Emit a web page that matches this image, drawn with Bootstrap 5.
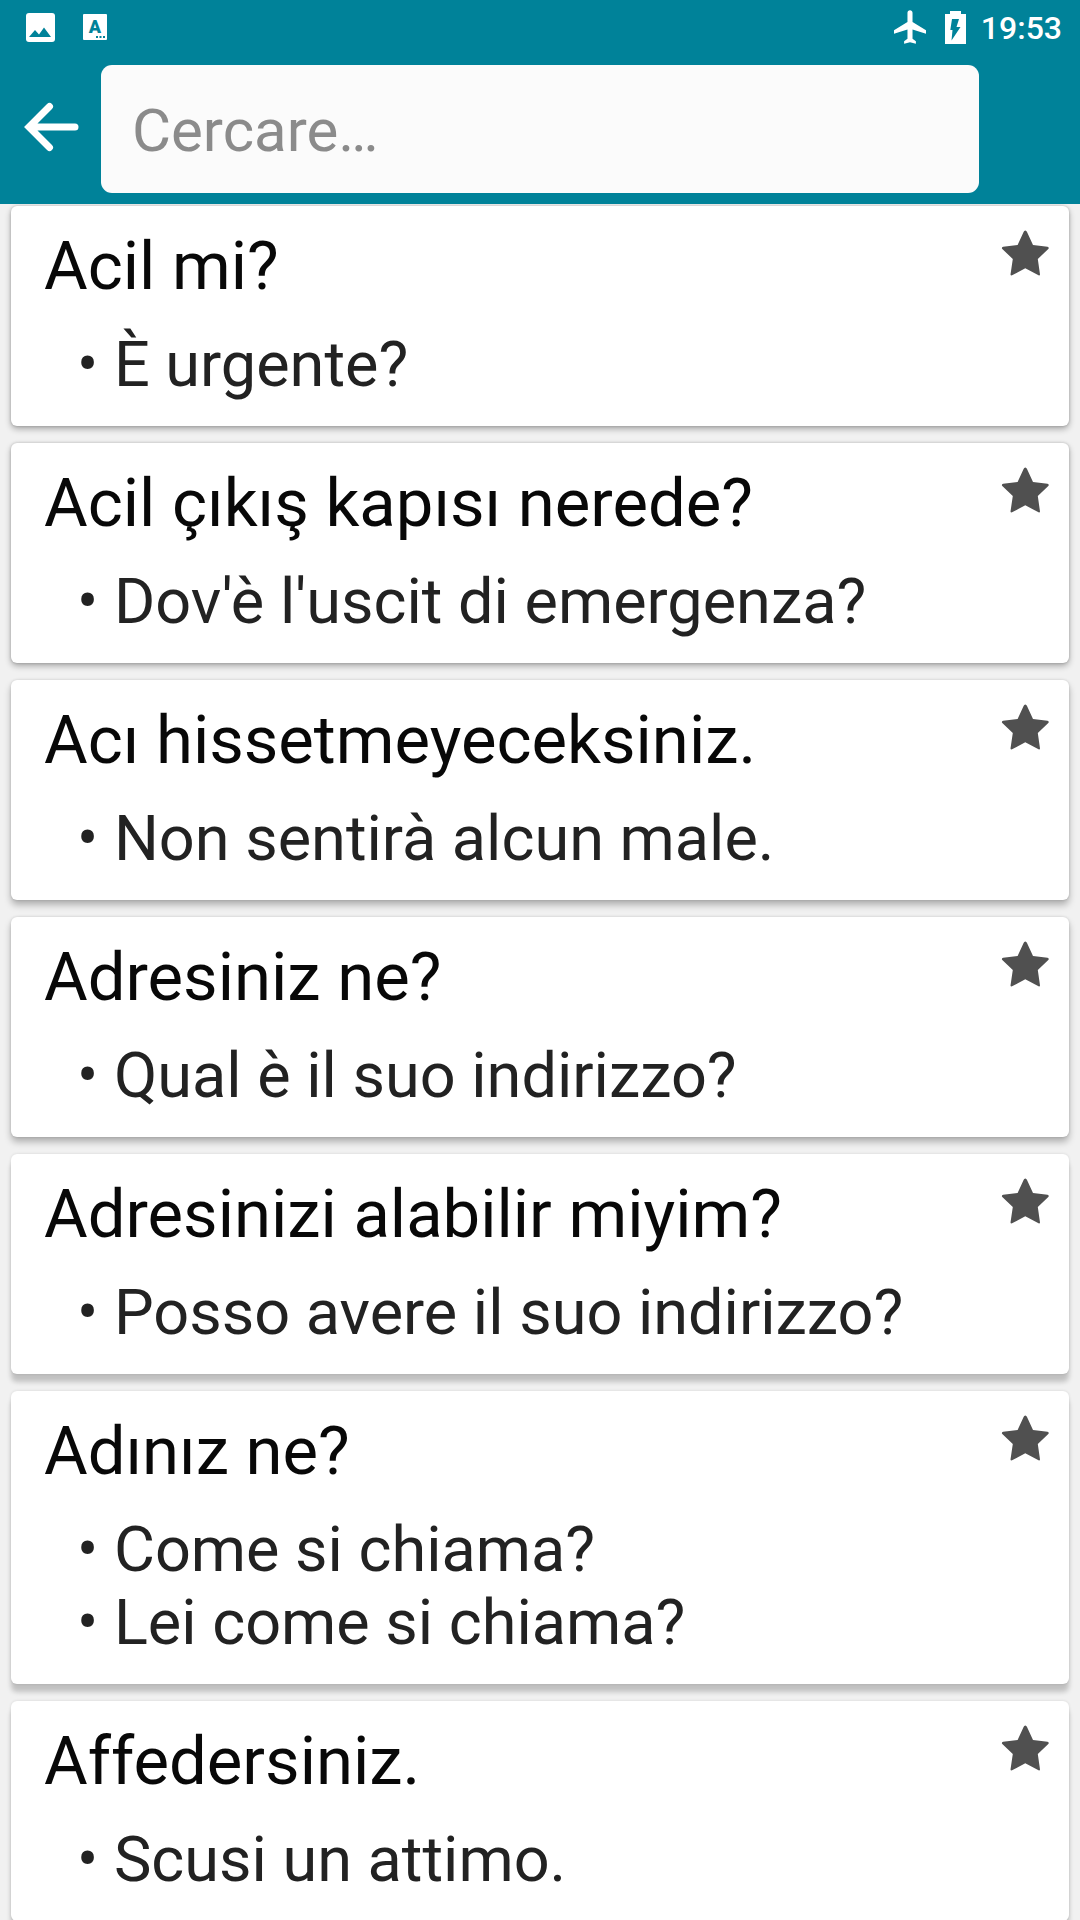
<!DOCTYPE html>
<html lang="it">
<head>
<meta charset="utf-8">
<meta name="viewport" content="width=device-width, initial-scale=1">
<title>Frasario</title>
<link rel="stylesheet" href="https://cdn.jsdelivr.net/npm/bootstrap@5.3.0/dist/css/bootstrap.min.css">
<style>
  body { font-family: Roboto, "Noto Sans", sans-serif; background: #f1f1f1; }
  .app-head { background: #008299; }
  .status-bar { height: 54px; padding: 0 18px 0 26px; }
  .status-left { gap: 28px; }
  .status-clock { font-size: 32px; line-height: 54px; font-weight: 500; margin-left: 15px; padding-top: 2px; }
  .battery { margin-left: 19px; }
  .tool-bar { padding: 11px 101px 11px 24px; gap: 22px; }
  .back-btn { margin-bottom: 4px; }
  .search-box { height: 128px; padding: 3px 31px 0; font-size: 60px; border-radius: 11px; background: #fbfbfb; }
  .search-box:focus { background: #fbfbfb; }
  .search-box::placeholder { color: #8b8b8b; }
  .phrase-list { padding: 2px 11px; gap: 17px; }
  .phrase { border-radius: 6px; padding: 20px 18px 25px 33px; box-shadow: 0 3px 6px rgba(0,0,0,.3), 0 0 3px rgba(0,0,0,.2); }
  .phrase:nth-child(n+3) { box-shadow: 0 5px 7px rgba(0,0,0,.27), 0 0 3px rgba(0,0,0,.15); }
  .phrase:nth-child(n+5) { box-shadow: 0 8px 5px rgba(0,0,0,.2), 0 0 3px rgba(0,0,0,.12); }
  .phrase-title { font-size: 67px; line-height: 81px; color: #080808; margin-bottom: 21px; font-weight: 400; }
  .phrase-text { font-size: 63px; line-height: 73px; color: #222; padding-left: 33px; }
  .star-btn { color: #505050; margin-top: 2px; }
</style>
<script src="https://cdn.jsdelivr.net/npm/bootstrap@5.3.0/dist/js/bootstrap.bundle.min.js"></script>
</head>
<body class="vh-100 overflow-hidden d-flex flex-column">
<svg class="d-none" xmlns="http://www.w3.org/2000/svg">
  <symbol id="star" viewBox="0 0 51 51"><path d="M25.300 2.500Q26.500 2.500 27 4L33 17 47.500 18.700Q49.500 19.300 48.300 21L37.800 31 40 46.500Q39.800 47.800 38.500 47.300L25.300 40.300 12 47.300Q10.700 47.800 10.500 46.500L12.800 31 2.300 21Q1.100 19.300 3.100 18.700L17.600 17 23.600 4Q24.100 2.500 25.300 2.500Z" fill="currentColor"/></symbol>
</svg>
<header class="app-head text-white flex-shrink-0">
  <div class="status-bar d-flex align-items-center justify-content-between">
    <div class="status-left d-flex align-items-center">
      <svg width="29" height="29" viewBox="0 0 29 29" aria-hidden="true"><rect width="29" height="29" rx="3" fill="#fff"/><path d="M3 24L9 17 13 21.500 18 14.500 25 24Z" fill="#008299"/></svg>
      <svg width="24" height="26" viewBox="0 0 24 26" aria-hidden="true"><rect width="24" height="26" rx="1" fill="#fff"/><text x="12" y="19" text-anchor="middle" font-family="Roboto, sans-serif" font-weight="900" font-size="18" fill="#008299">A</text><path d="M13 22h2v2h-2zM16.500 22h2v2h-2zM20 22h2v2h-2z" fill="#008299"/></svg>
    </div>
    <div class="d-flex align-items-center">
      <svg width="32" height="34" viewBox="2 2 19 20" fill="#fff" aria-hidden="true"><path d="M21 16v-2l-8-5V3.500c0-.83-.67-1.500-1.500-1.500S10 2.670 10 3.500V9l-8 5v2l8-2.500V19l-2 1.500V22l3.500-1 3.500 1v-1.500L13 19v-5.500l8 2.500z"/></svg>
      <svg class="battery" width="21" height="33" viewBox="0 0 21 33" aria-hidden="true"><path d="M5 0h11v3h5v30H0V3h5z" fill="#fff"/><path d="M7 8H14L11.500 16H15.500L6.500 29.500 7.500 19H5.300Z" fill="#008299"/></svg>
      <span class="status-clock">19:53</span>
    </div>
  </div>
  <div class="tool-bar d-flex align-items-center">
    <button type="button" class="back-btn btn p-0 border-0 text-white d-flex flex-shrink-0" aria-label="Indietro">
      <svg width="55" height="50" viewBox="0 0 55 50" fill="none" stroke="#fff" stroke-width="7" stroke-linecap="round" stroke-linejoin="miter"><path d="M25.500 4.500L5 25 25.500 45.500M7 25H51"/></svg>
    </button>
    <input type="text" class="search-box form-control border-0 shadow-none" placeholder="Cercare…" aria-label="Cercare">
  </div>
</header>
<main class="phrase-list d-flex flex-column flex-grow-1 overflow-hidden">
  <article class="phrase bg-white flex-shrink-0">
    <div class="d-flex justify-content-between align-items-start">
      <h2 class="phrase-title">Acil mi?</h2>
      <button type="button" class="star-btn btn p-0 border-0 d-flex" aria-label="Preferito"><svg width="51" height="51"><use href="#star"/></svg></button>
    </div>
    <ul class="phrase-text list-unstyled mb-0"><li>• È urgente?</li></ul>
  </article>
  <article class="phrase bg-white flex-shrink-0">
    <div class="d-flex justify-content-between align-items-start">
      <h2 class="phrase-title">Acil çıkış kapısı nerede?</h2>
      <button type="button" class="star-btn btn p-0 border-0 d-flex" aria-label="Preferito"><svg width="51" height="51"><use href="#star"/></svg></button>
    </div>
    <ul class="phrase-text list-unstyled mb-0"><li>• Dov'è l'uscit di emergenza?</li></ul>
  </article>
  <article class="phrase bg-white flex-shrink-0">
    <div class="d-flex justify-content-between align-items-start">
      <h2 class="phrase-title">Acı hissetmeyeceksiniz.</h2>
      <button type="button" class="star-btn btn p-0 border-0 d-flex" aria-label="Preferito"><svg width="51" height="51"><use href="#star"/></svg></button>
    </div>
    <ul class="phrase-text list-unstyled mb-0"><li>• Non sentirà alcun male.</li></ul>
  </article>
  <article class="phrase bg-white flex-shrink-0">
    <div class="d-flex justify-content-between align-items-start">
      <h2 class="phrase-title">Adresiniz ne?</h2>
      <button type="button" class="star-btn btn p-0 border-0 d-flex" aria-label="Preferito"><svg width="51" height="51"><use href="#star"/></svg></button>
    </div>
    <ul class="phrase-text list-unstyled mb-0"><li>• Qual è il suo indirizzo?</li></ul>
  </article>
  <article class="phrase bg-white flex-shrink-0">
    <div class="d-flex justify-content-between align-items-start">
      <h2 class="phrase-title">Adresinizi alabilir miyim?</h2>
      <button type="button" class="star-btn btn p-0 border-0 d-flex" aria-label="Preferito"><svg width="51" height="51"><use href="#star"/></svg></button>
    </div>
    <ul class="phrase-text list-unstyled mb-0"><li>• Posso avere il suo indirizzo?</li></ul>
  </article>
  <article class="phrase bg-white flex-shrink-0">
    <div class="d-flex justify-content-between align-items-start">
      <h2 class="phrase-title">Adınız ne?</h2>
      <button type="button" class="star-btn btn p-0 border-0 d-flex" aria-label="Preferito"><svg width="51" height="51"><use href="#star"/></svg></button>
    </div>
    <ul class="phrase-text list-unstyled mb-0"><li>• Come si chiama?</li><li>• Lei come si chiama?</li></ul>
  </article>
  <article class="phrase bg-white flex-shrink-0">
    <div class="d-flex justify-content-between align-items-start">
      <h2 class="phrase-title">Affedersiniz.</h2>
      <button type="button" class="star-btn btn p-0 border-0 d-flex" aria-label="Preferito"><svg width="51" height="51"><use href="#star"/></svg></button>
    </div>
    <ul class="phrase-text list-unstyled mb-0"><li>• Scusi un attimo.</li></ul>
  </article>
</main>
</body>
</html>
